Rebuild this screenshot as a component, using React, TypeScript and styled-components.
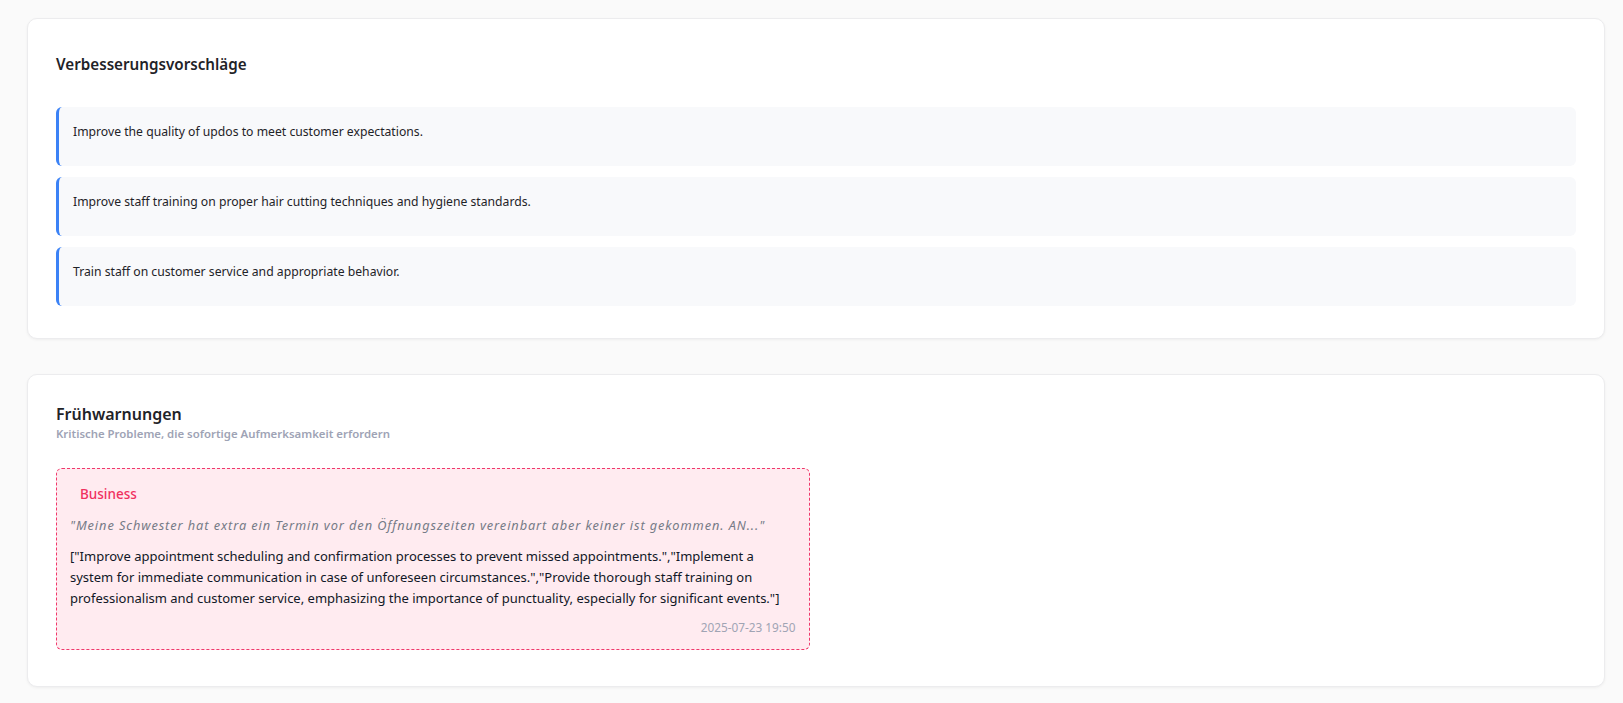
import React from "react";
import styled, { createGlobalStyle } from "styled-components";

const Global = createGlobalStyle`
  html, body { margin: 0; padding: 0; background: #fafafa; }
  body { font-family: "Noto Sans", "Open Sans", "Liberation Sans", sans-serif; color: #111827; }
`;

const Page = styled.div`
  display: flex;
  flex-direction: column;
  gap: 35px;
  padding: 18px 18px 40px 27px;
`;

const Card = styled.section<{ $pt: number; $pb: number }>`
  background: #ffffff;
  border: 1px solid #ececee;
  border-radius: 10px;
  box-shadow: 0 1px 3px rgba(0, 0, 0, 0.05);
  padding: ${(p) => p.$pt}px 28px ${(p) => p.$pb}px 28px;
`;

const Title = styled.h2<{ $size: number }>`
  margin: 0;
  font-size: ${(p) => p.$size}px;
  line-height: 24px;
  font-weight: 600;
  color: #1f2328;
`;

const Subtitle = styled.p`
  margin: 0;
  font-size: 11.4px;
  line-height: 16px;
  font-weight: 600;
  color: #9ea3b5;
`;

const Header = styled.div<{ $mb: number }>`
  margin-bottom: ${(p) => p.$mb}px;
`;

const List = styled.div`
  display: flex;
  flex-direction: column;
  gap: 11px;
`;

const Item = styled.div`
  background: #f8f9fb;
  border-left: 3px solid #3b82f6;
  border-radius: 6px;
  padding: 16px 14px 25px 14px;
  font-size: 12.2px;
  line-height: 18px;
  color: #1f2328;
`;

const Grid = styled.div`
  display: grid;
  grid-template-columns: 1fr 1fr;
  gap: 13px;
`;

const Alert = styled.div`
  background: #ffebf0;
  border: 1px dashed #f0386b;
  border-radius: 6px;
  padding: 13px 13px 14px 13px;
  display: flex;
  flex-direction: column;
`;

const Badge = styled.span`
  align-self: flex-start;
  padding: 2px 10px;
  font-size: 13.5px;
  line-height: 20px;
  color: #f0315f;
  font-weight: 500;
  margin-bottom: 10px;
`;

const Quote = styled.p`
  margin: 0 0 12px 0;
  font-size: 12.8px;
  line-height: 18px;
  font-style: italic;
  letter-spacing: 0.9px;
  color: #767b87;
`;

const Body = styled.p`
  margin: 0 0 10px 0;
  font-size: 13px;
  line-height: 21px;
  color: #111827;
`;

const DateText = styled.div`
  align-self: flex-end;
  font-size: 11.8px;
  line-height: 16px;
  color: #a0a4b4;
`;

const suggestions = [
  "Improve the quality of updos to meet customer expectations.",
  "Improve staff training on proper hair cutting techniques and hygiene standards.",
  "Train staff on customer service and appropriate behavior.",
];

export default function App() {
  return (
    <>
      <Global />
      <Page>
        <Card $pt={33} $pb={32}>
          <Header $mb={31}>
            <Title $size={15.2}>Verbesserungsvorschläge</Title>
          </Header>
          <List>
            {suggestions.map((s) => (
              <Item key={s}>{s}</Item>
            ))}
          </List>
        </Card>
        <Card $pt={27} $pb={36}>
          <Header $mb={26}>
            <Title $size={16}>Frühwarnungen</Title>
            <Subtitle>Kritische Probleme, die sofortige Aufmerksamkeit erfordern</Subtitle>
          </Header>
          <Grid>
            <Alert>
              <Badge>Business</Badge>
              <Quote>
                "Meine Schwester hat extra ein Termin vor den Öffnungszeiten vereinbart aber keiner ist gekommen. AN..."
              </Quote>
              <Body>
                ["Improve appointment scheduling and confirmation processes to prevent missed appointments.","Implement a
                system for immediate communication in case of unforeseen circumstances.","Provide thorough staff training on
                professionalism and customer service, emphasizing the importance of punctuality, especially for significant events."]
              </Body>
              <DateText>2025-07-23 19:50</DateText>
            </Alert>
          </Grid>
        </Card>
      </Page>
    </>
  );
}
